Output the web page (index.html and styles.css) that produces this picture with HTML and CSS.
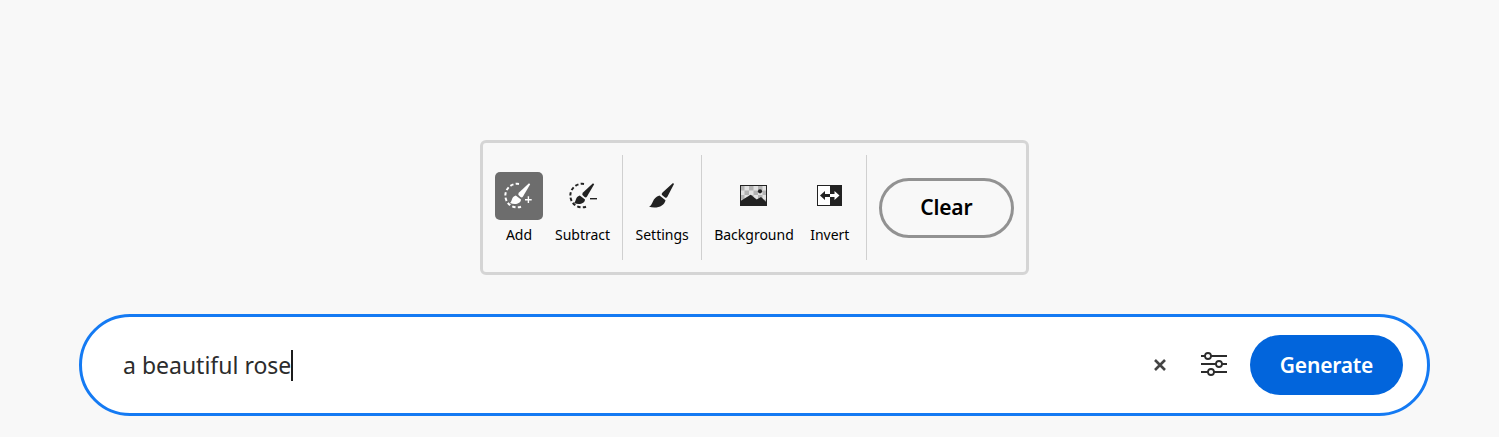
FILE: index.html
```html
<!DOCTYPE html>
<html lang="en">
<head>
    <meta charset="UTF-8">
    <title>Generative fill</title>
    <link rel="stylesheet" href="styles.css">
</head>
<body>
    <main class="page">
        <div class="toolbar">
            <div class="tool-group">
                <div class="tool">
                    <span class="tool-icon tool-icon-active">
                        <svg width="48" height="48" viewBox="0 0 48 48">
                            <path class="dash" d="M24 11.9 A11.8 11.8 0 1 0 26 34.7"/>
                            <path class="brush" d="M34 11.3 L35.2 12.3 L28 24.5 Q27 26 25.5 25 L23.5 23 Q22.8 22 24 20.5 Z"/>
                            <path class="brush" d="M20.8 23.6 L26 27.4 C25.8 31.5 20.5 33 15 31 C17.5 29.5 16 25 20.8 23.6 Z"/>
                            <path class="sign" d="M30 27.7 H36.7 M33.4 24.3 V31"/>
                        </svg>
                    </span>
                    <span class="tool-label">Add</span>
                </div>
                <div class="tool">
                    <span class="tool-icon">
                        <svg width="48" height="48" viewBox="0 0 48 48">
                            <path class="dash" d="M25 11.9 A11.8 11.8 0 1 0 27 34.7"/>
                            <path class="brush" d="M34 11.3 L35.2 12.3 L28 24.5 Q27 26 25.5 25 L23.5 23 Q22.8 22 24 20.5 Z"/>
                            <path class="brush" d="M20.8 23.6 L26 27.4 C25.8 31.5 20.5 33 15 31 C17.5 29.5 16 25 20.8 23.6 Z"/>
                            <path class="sign" d="M31 26.7 H38"/>
                        </svg>
                    </span>
                    <span class="tool-label">Subtract</span>
                </div>
            </div>
            <div class="tool-group">
                <div class="tool tool-settings">
                    <span class="tool-icon">
                        <svg width="48" height="48" viewBox="0 0 48 48">
                            <path class="brush" d="M35 11 L36 12 L29.5 24.5 Q28.5 26.5 27 25.5 L24 23 Q23 22 24.5 20.5 Z"/>
                            <path class="brush" d="M21.5 23.5 L27.5 28.2 C26.5 34 19 37 11 34.7 C15 33.5 14 25.5 21.5 23.5 Z"/>
                        </svg>
                    </span>
                    <span class="tool-label">Settings</span>
                </div>
            </div>
            <div class="tool-group">
                <div class="tool">
                    <span class="tool-icon">
                        <svg width="48" height="48" viewBox="0 0 48 48">
                            <defs>
                                <pattern id="checks" width="9" height="9" patternUnits="userSpaceOnUse" x="10" y="14">
                                    <rect width="9" height="9" fill="#e2e2e2"/>
                                    <rect width="4.5" height="4.5" fill="#b4b4b4"/>
                                    <rect x="4.5" y="4.5" width="4.5" height="4.5" fill="#b4b4b4"/>
                                </pattern>
                            </defs>
                            <rect x="10" y="13" width="27" height="21" fill="url(#checks)"/>
                            <path d="M10 34 V29.3 L20.7 22.7 L26.7 27.5 L31 25 L37 30.7 V34 Z" fill="#222"/>
                            <circle cx="30" cy="19.3" r="2.1" fill="#222"/>
                            <rect x="10.5" y="13.5" width="26" height="20" fill="none" stroke="#222"/>
                        </svg>
                    </span>
                    <span class="tool-label">Background</span>
                </div>
                <div class="tool">
                    <span class="tool-icon">
                        <svg width="48" height="48" viewBox="0 0 48 48">
                            <rect x="11.5" y="13.5" width="24" height="20" fill="#fff" stroke="#222"/>
                            <rect x="24" y="13" width="12" height="21" fill="#222"/>
                            <path d="M24 22.1 H19 V19 L14 23.5 L19 28 V24.9 H24 Z" fill="#222"/>
                            <path d="M24 22.1 H28.5 V19 L33.5 23.5 L28.5 28 V24.9 H24 Z" fill="#fff"/>
                        </svg>
                    </span>
                    <span class="tool-label">Invert</span>
                </div>
            </div>
            <button class="clear-btn" type="button">Clear</button>
        </div>

        <div class="prompt">
            <div class="prompt-text">a beautiful rose<span class="caret"></span></div>
            <button class="icon-btn" type="button" aria-label="Clear prompt">
                <svg width="40" height="40" viewBox="0 0 40 40">
                    <path d="M15 15 L25 25 M25 15 L15 25" fill="none" stroke="#444" stroke-width="2.6"/>
                </svg>
            </button>
            <button class="icon-btn" type="button" aria-label="Options">
                <svg width="40" height="40" viewBox="0 0 40 40">
                    <g fill="none" stroke="#2c2c2c" stroke-width="1.8">
                        <path d="M7 11 H11 M17 11 H33"/>
                        <path d="M7 19 H22 M28 19 H33"/>
                        <path d="M7 27 H14 M20 27 H33"/>
                        <circle cx="14" cy="11" r="3"/>
                        <circle cx="25" cy="19" r="3"/>
                        <circle cx="17" cy="27" r="3"/>
                    </g>
                </svg>
            </button>
            <button class="generate-btn" type="button">Generate</button>
        </div>
    </main>
</body>
</html>
```

FILE: styles.css
```css
* {
    box-sizing: border-box;
    margin: 0;
    padding: 0;
}

body {
    background-color: #f8f8f8;
    color: #000;
    font-family: "Noto Sans", "Open Sans", sans-serif;
    height: 437px;
    overflow: hidden;
}

.page {
    display: flex;
    flex-direction: column;
    align-items: center;
    gap: 39px;
    padding: 140px 69px 0 79px;
}

.toolbar {
    display: flex;
    align-items: center;
    width: 549px;
    height: 135px;
    padding: 0 12px;
    border: 3px solid #d5d5d5;
    border-radius: 6px;
}

.tool-group {
    display: flex;
    gap: 12px;
    height: 105px;
    padding-top: 17px;
    padding-right: 12px;
    margin-right: 12px;
    border-right: 1px solid #d0d0d0;
}

.tool {
    display: flex;
    flex-direction: column;
    align-items: center;
    min-width: 48px;
}

.tool-settings {
    min-width: 54px;
}

.tool-icon {
    display: block;
    width: 48px;
    height: 48px;
    border-radius: 5px;
}

.tool-icon svg {
    display: block;
}

.tool-icon-active {
    background-color: #6d6d6d;
    --ink: #fff;
}

.tool-label {
    margin-top: 5px;
    font-size: 14px;
    line-height: 20px;
    white-space: nowrap;
}

.dash {
    fill: none;
    stroke: var(--ink, #222);
    stroke-width: 2;
    stroke-dasharray: 3.4 2.2;
}

.brush {
    fill: var(--ink, #222);
}

.sign {
    fill: none;
    stroke: var(--ink, #222);
    stroke-width: 1.4;
}

.clear-btn {
    width: 135px;
    height: 60px;
    padding-bottom: 2px;
    background: transparent;
    border: 3px solid #929292;
    border-radius: 30px;
    color: #000;
    font-family: inherit;
    font-size: 21px;
    font-weight: 600;
    letter-spacing: -0.2px;
}

.prompt {
    display: flex;
    align-items: center;
    width: 1351px;
    height: 102px;
    padding: 0 24px 0 41px;
    background-color: #fff;
    border: 3px solid #147af3;
    border-radius: 51px;
}

.prompt-text {
    display: flex;
    align-items: center;
    flex: 1;
    color: #2c2c2c;
    font-size: 23px;
    line-height: 32px;
}

.caret {
    width: 2px;
    height: 31px;
    background-color: #1c1c1c;
}

.icon-btn {
    display: block;
    width: 40px;
    height: 40px;
    margin-right: 14px;
    background: none;
    border: none;
}

.icon-btn svg {
    display: block;
}

.icon-btn:nth-of-type(2) {
    margin-right: 16px;
}

.generate-btn {
    width: 153px;
    height: 60px;
    background-color: #0265dc;
    border: none;
    border-radius: 30px;
    color: #fff;
    font-family: inherit;
    font-size: 21px;
    font-weight: 600;
    letter-spacing: -0.2px;
}
```
